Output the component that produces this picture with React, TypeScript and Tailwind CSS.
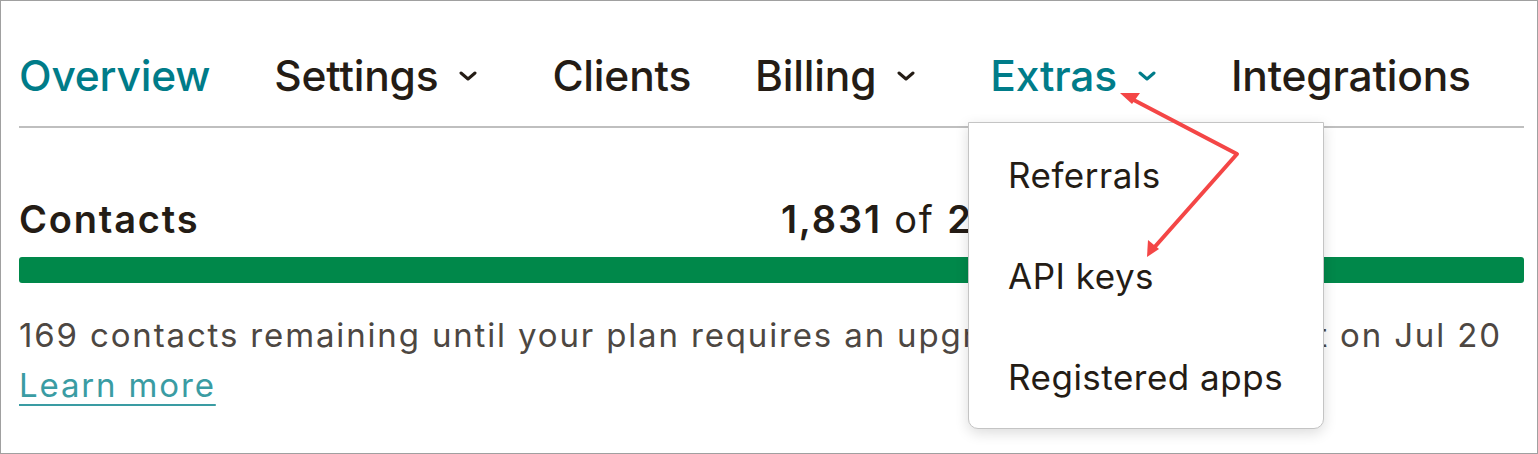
const NAV = [
  { label: 'Overview', active: true, menu: false },
  { label: 'Settings', active: false, menu: true },
  { label: 'Clients', active: false, menu: false },
  { label: 'Billing', active: false, menu: true },
  { label: 'Extras', active: true, menu: true },
  { label: 'Integrations', active: false, menu: false },
];

const EXTRAS = ['Referrals', 'API keys', 'Registered apps'];

function Chevron({ active }: { active: boolean }) {
  return (
    <svg
      width="18"
      height="12"
      viewBox="0 0 18 12"
      className={active ? 'text-[#007c89]' : 'text-[#241c15]'}
    >
      <polyline
        points="2,3 9,9 16,3"
        fill="none"
        stroke="currentColor"
        strokeWidth="3"
        strokeLinecap="round"
        strokeLinejoin="round"
      />
    </svg>
  );
}

function Annotation() {
  return (
    <svg
      className="absolute left-0 top-0 pointer-events-none"
      width="1536"
      height="452"
      viewBox="1 1 1536 452"
    >
      <g stroke="#f44646" strokeWidth="4" fill="none" strokeLinecap="round" strokeLinejoin="round">
        <polyline points="1128,97 1237,154 1152,250" />
      </g>
      <polygon points="1120,93 1140,93 1132,104" fill="#f44646" />
      <polygon points="1147,257 1148,240 1159,249" fill="#f44646" />
    </svg>
  );
}

export default function App() {
  return (
    <div className="relative w-[1538px] h-[454px] overflow-hidden bg-white border border-[#a0a0a0] pl-[18px] pr-[13px] font-['Inter',sans-serif] text-[#241c15]">
      <nav className="flex items-start h-[127px] pt-[54px] border-b-2 border-[#bfbfbf]">
        {NAV.map((item) => (
          <div
            key={item.label}
            className={`flex items-center gap-[21px] ${item.menu ? 'mr-[75px]' : 'mr-[64px]'}`}
          >
            <span
              className={`text-[42.5px] leading-none font-medium tracking-[-0.2px] ${
                item.active ? 'text-[#007c89]' : 'text-[#241c15]'
              }`}
            >
              {item.label}
            </span>
            {item.menu && <Chevron active={item.active} />}
          </div>
        ))}
      </nav>

      <section>
        <div className="grid grid-cols-[762px_1fr] mt-[72px] text-[38px] leading-none tracking-[1.8px]">
          <h2 className="font-semibold">Contacts</h2>
          <div>
            <span className="font-semibold">1,831</span> of{' '}
            <span className="font-semibold">2,000</span>
          </div>
        </div>
        <div className="mt-[19px] h-[26px] rounded-[3px] bg-[#00884a]" />
        <p className="mt-[27px] text-[33px] leading-[50px] tracking-[1.85px] text-[#4d4742]">
          <span className="block whitespace-nowrap">
            169 contacts remaining until your plan requires an upgrade.
            <span className="[word-spacing:14px]"> Monthly reset</span>
            <span> on Jul 20</span>
          </span>
          <a
            href="#"
            className="text-[#3a9ca3] underline decoration-2 underline-offset-[7px]"
          >
            Learn more
          </a>
        </p>
      </section>

      <div className="absolute left-[967px] top-[121px] w-[356px] pt-[2px] bg-white border border-[#c4c4c4] rounded-b-[10px] shadow-[0_4px_14px_rgba(0,0,0,0.14)]">
        {EXTRAS.map((x) => (
          <div key={x} className="pl-[39px] text-[35px] leading-[101px] tracking-[0.5px] text-[#241c15]">
            {x}
          </div>
        ))}
      </div>

      <Annotation />
    </div>
  );
}
